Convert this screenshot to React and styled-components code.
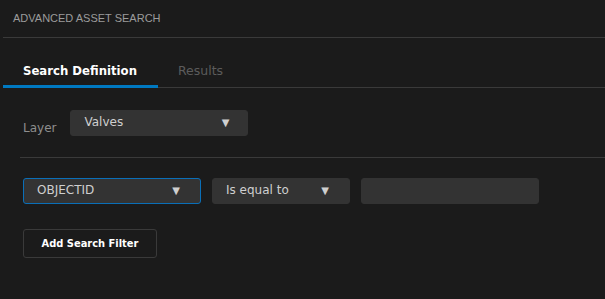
import React from "react";
import styled, { createGlobalStyle } from "styled-components";

const Global = createGlobalStyle`
  html, body {
    margin: 0;
    padding: 0;
    background: #1b1b1b;
  }
  body {
    width: 605px;
    height: 299px;
    overflow: hidden;
    font-family: "DejaVu Sans", Verdana, sans-serif;
  }
`;

const Panel = styled.div`
  width: 605px;
  height: 299px;
  background: #1b1b1b;
  padding-left: 3px;
  box-sizing: border-box;
`;

const Header = styled.div`
  height: 38px;
  padding-left: 10px;
  display: flex;
  align-items: center;
  border-bottom: 1px solid #3a3a3a;
  box-sizing: border-box;
  font-family: "Liberation Sans", Arial, sans-serif;
  font-size: 11px;
  color: #9c9c9c;
  padding-bottom: 1px;
`;

const Tabs = styled.div`
  display: flex;
  margin-top: 17px;
  border-bottom: 1px solid #3a3a3a;
`;

const Tab = styled.div`
  height: 33px;
  padding: 8px 0 0 20px;
  font-family: ${(p) =>
    p.active ? `"DejaVu Sans Condensed", "DejaVu Sans", sans-serif` : `"DejaVu Sans", sans-serif`};
  font-size: ${(p) => (p.active ? 13 : 12.5)}px;
  font-weight: ${(p) => (p.active ? "bold" : "normal")};
  white-space: nowrap;
  color: ${(p) => (p.active ? "#ffffff" : "#5c5c5c")};
  border-bottom: 3px solid ${(p) => (p.active ? "#0079c1" : "transparent")};
  margin-bottom: -1px;
  width: ${(p) => p.w}px;
  box-sizing: border-box;
`;

const Body = styled.div`
  padding: 22px 0 0 17px;
`;

const LayerRow = styled.div`
  display: flex;
  align-items: center;
  gap: 14px;
  padding-left: 3px;
`;

const Label = styled.span`
  font-size: 12px;
  color: #8e8e8e;
  padding-top: 9px;
`;

const Select = styled.div`
  width: ${(p) => p.w}px;
  height: 26px;
  box-sizing: border-box;
  background: #333333;
  border: 1px solid ${(p) => (p.focus ? "#0a6fb8" : "#333333")};
  border-radius: 3px;
  display: flex;
  align-items: center;
  padding: 0 ${(p) => p.pr || 20}px 2px 13px;
  font-size: 12px;
  color: #cfcfcf;
`;

const SelectText = styled.span`
  flex: 1;
`;

const Arrow = styled.span`
  font-size: 10px;
  color: #cfcfcf;
`;

const Divider = styled.div`
  height: 1px;
  background: #3a3a3a;
  margin: 21px 0 20px 0;
`;

const FilterRow = styled.div`
  display: flex;
  gap: 11px;
  padding-left: 3px;
`;

const AddButton = styled.button`
  margin: 25px 0 0 3px;
  width: 134px;
  height: 29px;
  background: transparent;
  border: 1px solid #3a3a3a;
  border-radius: 3px;
  font-family: "DejaVu Sans Condensed", "DejaVu Sans", sans-serif;
  font-size: 11px;
  font-weight: bold;
  color: #ffffff;
`;

export default function App() {
  return (
    <Panel>
      <Global />
      <Header>ADVANCED ASSET SEARCH</Header>
      <Tabs>
        <Tab active w={155}>Search Definition</Tab>
        <Tab w={120}>Results</Tab>
      </Tabs>
      <Body>
        <LayerRow>
          <Label>Layer</Label>
          <Select w={178} pr={18}>
            <SelectText>Valves</SelectText>
            <Arrow>▼</Arrow>
          </Select>
        </LayerRow>
        <Divider />
        <FilterRow>
          <Select w={178} focus>
            <SelectText>OBJECTID</SelectText>
            <Arrow>▼</Arrow>
          </Select>
          <Select w={138}>
            <SelectText>Is equal to</SelectText>
            <Arrow>▼</Arrow>
          </Select>
          <Select w={178} />
        </FilterRow>
        <AddButton>Add Search Filter</AddButton>
      </Body>
    </Panel>
  );
}
